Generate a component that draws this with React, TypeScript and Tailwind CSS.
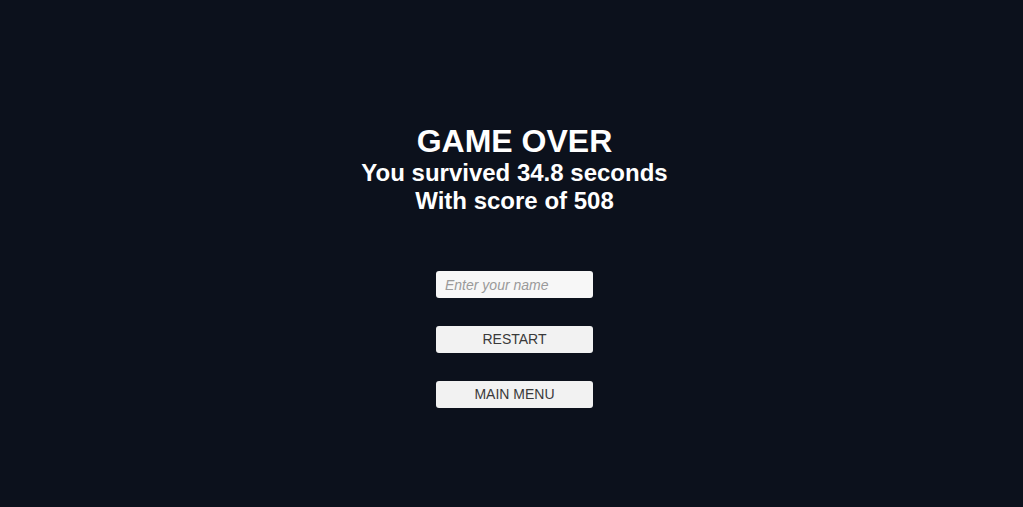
export default function App() {
  return (
    <div className="flex h-[507px] w-full flex-col items-center bg-[#0c111c] pl-[6px] pt-[125px] font-['Liberation_Sans',Arial,sans-serif]">
      <div className="flex flex-col items-center font-bold text-white">
        <h1 className="text-[32px] leading-[32px]">GAME OVER</h1>
        <p className="mt-[2px] text-[24px] leading-[28px]">You survived 34.8 seconds</p>
        <p className="text-[24px] leading-[28px]">With score of 508</p>
      </div>

      <div className="mt-[56px] flex flex-col gap-[28px]">
        <input
          type="text"
          placeholder="Enter your name"
          className="h-[27px] w-[157px] rounded-[3px] bg-[#f7f7f7] px-[9px] text-[14px] text-[#333] outline-none placeholder:italic placeholder:text-[#9a9a9a]"
        />
        <button className="h-[27px] w-[157px] rounded-[3px] bg-[#f2f2f2] text-[14px] text-[#3a3a3a]">
          RESTART
        </button>
        <button className="h-[27px] w-[157px] rounded-[3px] bg-[#f2f2f2] text-[14px] text-[#3a3a3a]">
          MAIN MENU
        </button>
      </div>
    </div>
  );
}
